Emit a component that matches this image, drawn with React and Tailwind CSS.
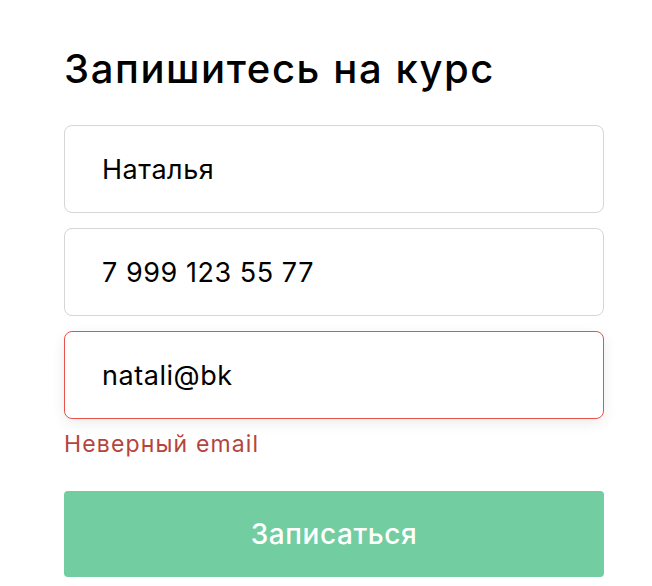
import React from 'react'

const fieldBase =
  'w-full h-[88px] rounded-lg border bg-white px-[37px] text-[27px] tracking-[0.02em] text-black outline-none'

function Field({ value, error }) {
  return (
    <input
      readOnly
      value={value}
      className={
        fieldBase +
        (error
          ? ' border-[#e8524a] shadow-[0_4px_14px_rgba(0,0,0,0.08)]'
          : ' border-[#d6d6da]')
      }
    />
  )
}

export default function App() {
  return (
    <div className="min-h-screen bg-white font-['Inter',sans-serif]">
      <div className="w-[540px] ml-16 pt-[46px]">
        <h1 className="text-[40px] leading-[46px] font-medium tracking-[0.04em] text-black">Запишитесь на курс</h1>

        <form className="mt-[33px] flex flex-col gap-[15px]">
          <Field value="Наталья" />
          <Field value="7 999 123 55 77" />
          <div>
            <Field value="natali@bk" error />
            <p className="mt-[10px] text-[23px] leading-[30px] tracking-[0.05em] text-[#b5453c]">Неверный email</p>
          </div>
        </form>

        <button className="mt-[32px] w-full h-[86px] rounded-[4px] bg-[#72cda0] text-white text-[28px] font-medium tracking-[0.02em]">
          Записаться
        </button>
      </div>
    </div>
  )
}
